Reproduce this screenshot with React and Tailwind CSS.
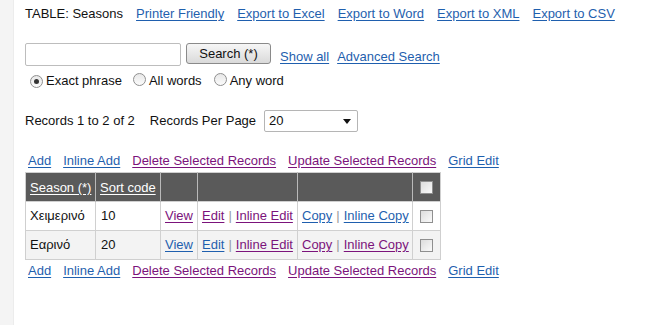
import React from 'react';

const BLUE = 'text-[#1f5fae] underline underline-offset-2';
const PURPLE = 'text-[#7b137b] underline underline-offset-2';

const Radio = ({ checked }) => (
  <span className="inline-flex items-center justify-center w-[13px] h-[13px] rounded-full border border-[#8f8f8f] bg-gradient-to-b from-[#e8e8e8] to-[#fbfbfb]">
    {checked && <span className="w-[5px] h-[5px] rounded-full bg-[#333]" />}
  </span>
);

const Check = () => (
  <span className="inline-block w-[13px] h-[13px] border border-[#8f8f8f] bg-gradient-to-br from-[#dcdcdc] to-[#fafafa]" />
);

const ActionLinks = () => (
  <div className="flex items-center h-[20px] pl-[3px] gap-[12px]">
    <a className={BLUE}>Add</a>
    <a className={BLUE}>Inline Add</a>
    <a className={PURPLE}>Delete Selected Records</a>
    <a className={PURPLE}>Update Selected Records</a>
    <a className={BLUE}>Grid Edit</a>
  </div>
);

const Sep = () => <span className="text-[#999] mx-[4px]">|</span>;

const rows = [
  { name: 'Χειμερινό', code: '10', bg: 'bg-white', view: PURPLE, edit: PURPLE, iedit: PURPLE, copy: BLUE, icopy: BLUE },
  { name: 'Εαρινό', code: '20', bg: 'bg-[#f3f3f3]', view: BLUE, edit: BLUE, iedit: PURPLE, copy: PURPLE, icopy: PURPLE },
];

export default function App() {
  return (
    <div className="flex w-[649px] h-[325px] bg-white text-[13px] leading-[16px] text-[#111]" style={{ fontFamily: '"Liberation Sans", Arial, sans-serif' }}>
      <div className="w-[14px] shrink-0 bg-[#f4f4f4] border-r border-[#ececec]" />
      <div className="flex-1 pl-[11px]">
        {/* title */}
        <div className="flex items-center h-[16px] mt-[6px] gap-[13px]">
          <span>TABLE: Seasons</span>
          <a className={BLUE}>Printer Friendly</a>
          <a className={BLUE}>Export to Excel</a>
          <a className={BLUE}>Export to Word</a>
          <a className={BLUE}>Export to XML</a>
          <a className={BLUE}>Export to CSV</a>
        </div>

        {/* search */}
        <div className="flex items-start mt-[21px] h-[24px]">
          <div className="w-[156px] h-[23px] border border-[#bdbdbd] rounded-[2px] bg-white" />
          <button className="ml-[5px] w-[85px] h-[21px] border border-[#8a8a8a] rounded-[3px] bg-gradient-to-b from-[#f6f6f6] to-[#dadada] text-[13px] leading-[18px]">
            Search (*)
          </button>
          <a className={`${BLUE} ml-[9px] mt-[6px]`}>Show all</a>
          <a className={`${BLUE} ml-[8px] mt-[6px]`}>Advanced Search</a>
        </div>

        {/* radios */}
        <div className="flex items-center h-[16px] mt-[6px] pl-[5px]">
          <Radio checked />
          <span className="ml-[3px]">Exact phrase</span>
          <span className="ml-[11px]"><Radio /></span>
          <span className="ml-[3px]">All words</span>
          <span className="ml-[12px]"><Radio /></span>
          <span className="ml-[3px]">Any word</span>
        </div>

        {/* records */}
        <div className="flex items-center mt-[21px] h-[22px]">
          <span>Records 1 to 2 of 2</span>
          <span className="ml-[15px]">Records Per Page</span>
          <div className="ml-[8px] w-[94px] h-[22px] border border-[#b5b5b5] rounded-[2px] flex items-center justify-between pl-[4px] pr-[6px] bg-white">
            <span>20</span>
            <svg width="8" height="5" viewBox="0 0 8 5"><path d="M0 0h8L4 5z" fill="#111" /></svg>
          </div>
        </div>

        {/* top links */}
        <div className="mt-[19px]">
          <ActionLinks />
        </div>

        {/* table */}
        <table className="mt-[1px] w-[415px] table-fixed border-collapse border border-[#cfcfcf]">
          <colgroup>
            <col className="w-[70px]" />
            <col className="w-[65px]" />
            <col className="w-[37px]" />
            <col className="w-[100px]" />
            <col className="w-[115px]" />
            <col className="w-[28px]" />
          </colgroup>
          <thead>
            <tr className="bg-[#5a5a5a] h-[29px] text-white">
              <th className="border-r border-[#b9b9b9] px-[4px] pt-[2px] text-left font-normal whitespace-nowrap"><a className="underline underline-offset-2">Season (*)</a></th>
              <th className="border-r border-[#b9b9b9] px-[4px] pt-[2px] text-left font-normal whitespace-nowrap"><a className="underline underline-offset-2">Sort code</a></th>
              <th className="border-r border-[#b9b9b9]" />
              <th className="border-r border-[#b9b9b9]" />
              <th className="border-r border-[#b9b9b9]" />
              <th className="align-middle"><div className="flex justify-center"><Check /></div></th>
            </tr>
          </thead>
          <tbody>
            {rows.map((r) => (
              <tr key={r.name} className={`${r.bg} h-[29px] border-t border-[#d0d0d0]`}>
                <td className="border-r border-[#d0d0d0] px-[4px]">{r.name}</td>
                <td className="border-r border-[#d0d0d0] px-[5px]">{r.code}</td>
                <td className="border-r border-[#d0d0d0] px-[4px]"><a className={r.view}>View</a></td>
                <td className="border-r border-[#d0d0d0] px-[4px] whitespace-nowrap">
                  <a className={r.edit}>Edit</a><Sep /><a className={r.iedit}>Inline Edit</a>
                </td>
                <td className="border-r border-[#d0d0d0] px-[4px] whitespace-nowrap">
                  <a className={r.copy}>Copy</a><Sep /><a className={r.icopy}>Inline Copy</a>
                </td>
                <td><div className="flex justify-center"><Check /></div></td>
              </tr>
            ))}
          </tbody>
        </table>

        {/* bottom links */}
        <div className="mt-[1px]">
          <ActionLinks />
        </div>
      </div>
    </div>
  );
}
